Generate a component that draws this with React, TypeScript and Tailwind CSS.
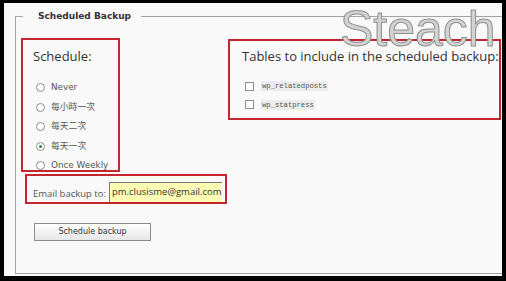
import React from "react";

const scheduleOptions = [
  { label: "Never", checked: false },
  { label: "每小時一次", checked: false },
  { label: "每天二次", checked: false },
  { label: "每天一次", checked: true },
  { label: "Once Weekly", checked: false },
];

const tables = ["wp_relatedposts", "wp_statpress"];

const Radio = ({ label, checked }: { label: string; checked: boolean }) => (
  <label className="flex items-center h-[19.5px] pl-[13px] text-[8.8px] text-[#555] font-['DejaVu_Sans','Noto_Sans_CJK_TC',sans-serif]">
    <span className="w-[9px] h-[9px] rounded-full border border-[#8c8c8c] bg-white flex items-center justify-center">
      {checked && <span className="w-[3px] h-[3px] rounded-full bg-[#3a7d3a]" />}
    </span>
    <span className="ml-[6px]">{label}</span>
  </label>
);

const TableCheck = ({ name }: { name: string }) => (
  <label className="flex items-center h-[18.5px] pl-[15px]">
    <span className="w-[9px] h-[9px] border border-[#8c8c8c] bg-white" />
    <code className="ml-[7px] px-[1px] bg-[#ececec] text-[7.2px] leading-[10px] text-[#555] font-['Liberation_Mono',monospace]">
      {name}
    </code>
  </label>
);

export default function App() {
  return (
    <div className="w-[506px] h-[281px] bg-black pl-[4px] pt-[3px]">
      <div className="relative w-[498px] h-[273px] bg-[#f9f9f9] overflow-hidden pt-[7px] pl-[11px]">
        {/* group box: legend row + bordered body */}
        <div className="w-[487px]">
          <div className="flex items-end h-[12px]">
            <span className="w-[8px] h-[6px] border-l border-t border-[#a3a3a3]" />
            <span className="pl-[15px] pr-[10px] text-[9px] leading-[12px] font-bold text-[#333] font-['DejaVu_Sans',sans-serif] whitespace-nowrap">
              Scheduled Backup
            </span>
            <span className="flex-1 h-[6px] border-t border-[#a3a3a3]" />
          </div>

          <div className="h-[252px] border-l border-b border-[#a3a3a3] pl-[5px] pt-[16px]">
            <div className="flex">
              {/* left column: schedule, email, button */}
              <div className="w-[207px] shrink-0">
                <div className="w-[99px] h-[134px] border-2 border-[#c4262e]">
                  <div className="pt-[8px] pl-[10px] text-[13px] leading-[16px] text-[#333] font-['Open_Sans',sans-serif]">
                    Schedule:
                  </div>
                  <div className="mt-[14px]">
                    {scheduleOptions.map((o) => (
                      <Radio key={o.label} label={o.label} checked={o.checked} />
                    ))}
                  </div>
                </div>

                <div className="mt-[2px] ml-[4px] w-[202px] h-[30px] border-2 border-[#c4262e] flex items-start pl-[6px]">
                  <span className="mt-[12px] text-[9.5px] leading-[12px] text-[#555] font-['Open_Sans',sans-serif] whitespace-nowrap">
                    Email backup to:
                  </span>
                  <input
                    readOnly
                    value="pm.clusisme@gmail.com"
                    className="mt-[6px] ml-[3px] w-[113px] h-[20px] pl-[2px] pb-[3px] bg-[#fcfcb4] border-l border-t border-[#777] text-[9.5px] text-[#333] font-['Open_Sans',sans-serif] outline-none"
                  />
                </div>

                <button className="mt-[19px] ml-[13px] w-[117px] h-[18px] border border-[#8a8a8a] bg-gradient-to-b from-white to-[#e6e6e6] text-[8px] text-[#333] font-['DejaVu_Sans',sans-serif]">
                  Schedule backup
                </button>
              </div>

              {/* right: tables */}
              <div className="mt-[1px] w-[273px] h-[81px] shrink-0 border-2 border-[#c4262e]">
                <div className="pt-[7px] pl-[12px] text-[13px] leading-[16px] text-[#333] font-['Open_Sans',sans-serif] whitespace-nowrap">
                  Tables to include in the scheduled backup:
                </div>
                <div className="mt-[13px]">
                  {tables.map((t) => (
                    <TableCheck key={t} name={t} />
                  ))}
                </div>
              </div>
            </div>
          </div>
        </div>

        {/* watermark */}
        <div className="absolute left-[336px] top-[1px] text-[50px] leading-[50px] text-[#d2d2d2] font-['Liberation_Sans',sans-serif] [-webkit-text-stroke:1px_#8f8f8f] pointer-events-none">
          Steach
        </div>
      </div>
    </div>
  );
}
